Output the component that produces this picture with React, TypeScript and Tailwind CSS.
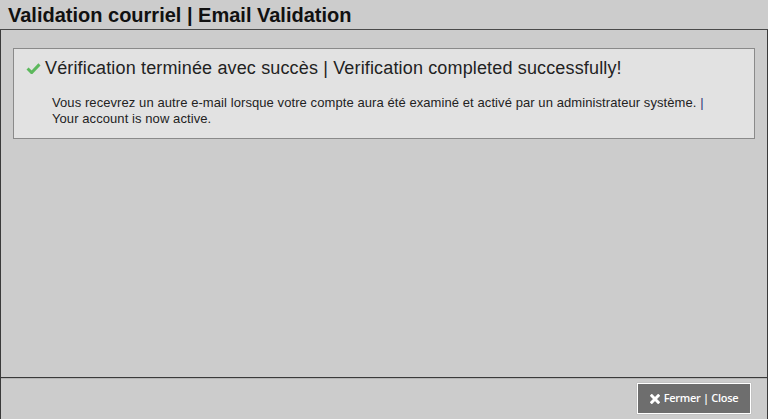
import React from 'react'

const CheckIcon = () => (
    <svg viewBox="0 0 16 12" className="h-[11px] w-[15px]" aria-hidden="true">
        <path d="M1.5 6 L6 10.5 L14.5 1.5" fill="none" stroke="#5cb85c" strokeWidth="3.2" strokeLinejoin="miter" />
    </svg>
)

const TimesIcon = () => (
    <svg viewBox="0 0 10 10" className="h-[10px] w-[10px]" aria-hidden="true">
        <path d="M1.8 1.8 L8.2 8.2 M8.2 1.8 L1.8 8.2" stroke="#ffffff" strokeWidth="3" strokeLinecap="square" />
    </svg>
)

export default function App() {
    return (
        <div className="flex h-[419px] w-[768px] flex-col bg-[#cccccc] font-['Liberation_Sans',Arial,sans-serif] text-[#111]">
            <div className="flex h-[30px] items-center border-b border-[#4a4a4a] px-[8px]">
                <h1 className="text-[20px] font-bold leading-none text-[#111]">Validation courriel | Email Validation</h1>
            </div>

            <div className="flex-1 border-x border-[#3a3a3a] px-[12px] pt-[18px]">
                <div className="border border-[#8a8a8a] bg-[#e2e2e2] pb-[11px] pl-[12px] pr-[12px] pt-[8px]">
                    <div className="flex items-center gap-[4px]">
                        <CheckIcon />
                        <h2 className="text-[18px] leading-[22px] tracking-[0.15px] text-[#222]">
                            Vérification terminée avec succès | Verification completed successfully!
                        </h2>
                    </div>
                    <p className="mt-[16px] pl-[26px] text-[13px] leading-[16px] tracking-[0.08px] text-[#222]">
                        Vous recevrez un autre e-mail lorsque votre compte aura été examiné et activé par un administrateur système. <span className="text-[#33337a]">|</span>
                        <br />
                        Your account is now active.
                    </p>
                </div>
            </div>

            <div className="flex h-[42px] items-center justify-end border-x border-t border-[#3a3a3a] pr-[16px] shadow-[inset_0_1px_0_#b5b5b5]">
                <button className="flex h-[31px] w-[114px] items-center justify-center gap-[4px] border border-white bg-[#6e6e6e] font-['Open_Sans',sans-serif] text-[11px] font-semibold tracking-[-0.3px] text-white shadow-[0_0_1px_#999]">
                    <TimesIcon />
                    Fermer | Close
                </button>
            </div>
        </div>
    )
}
